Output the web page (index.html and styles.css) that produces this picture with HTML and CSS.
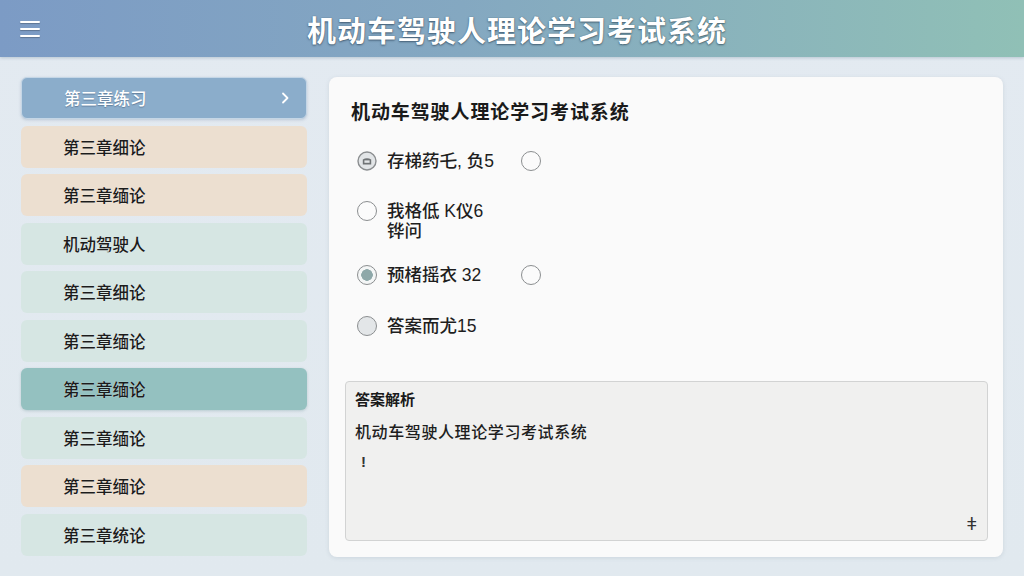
FILE: index.html
```html
<!DOCTYPE html>
<html lang="zh-CN">
<head>
  <meta charset="UTF-8" />
  <meta name="viewport" content="width=device-width, initial-scale=1" />
  <title>机动车驾驶人理论学习考试系统</title>
  <link rel="stylesheet" href="styles.css">
</head>
<body>

  <header class="topbar">
    <button class="menu-btn" aria-label="菜单">
      <span></span><span></span><span></span>
    </button>
    <h1>机动车驾驶人理论学习考试系统</h1>
    <div></div>
  </header>

  <div class="layout">
    <!-- Chapter list -->
    <nav class="chapters">
      <a class="chapter active" href="#">第三章练习
        <svg class="chevron" width="10" height="14" viewBox="0 0 10 14"><path d="M3 2.5 L7.5 7 L3 11.5" fill="none" stroke="#fff" stroke-width="1.8" stroke-linecap="round" stroke-linejoin="round"/></svg>
      </a>
      <a class="chapter sand" href="#">第三章细论</a>
      <a class="chapter sand" href="#">第三章缅论</a>
      <a class="chapter mint" href="#">机动驾驶人</a>
      <a class="chapter mint" href="#">第三章细论</a>
      <a class="chapter mint" href="#">第三章缅论</a>
      <a class="chapter teal" href="#">第三章缅论</a>
      <a class="chapter mint" href="#">第三章缅论</a>
      <a class="chapter sand" href="#">第三章缅论</a>
      <a class="chapter mint" href="#">第三章统论</a>
    </nav>

    <!-- Question card -->
    <main class="card">
      <h2>机动车驾驶人理论学习考试系统</h2>

      <div class="options">
        <div class="option">
          <span class="radio radio-busy">
            <svg width="20" height="20" viewBox="0 0 20 20"><circle cx="10" cy="10" r="9" fill="#e2e5e7" stroke="#8b8e90" stroke-width="1.4"/><path d="M5.8 8.6 Q10 5.8 14.2 8.6 V13.4 H5.8 Z" fill="#6f7375"/><rect x="7.4" y="9.4" width="5.2" height="2.4" fill="#e2e5e7"/></svg>
          </span>
          <span class="option-text">存梯药乇, 负5</span>
          <span class="radio"></span>
        </div>

        <div class="option two-line">
          <span class="radio"></span>
          <span class="option-text">我格低 K仪6<br>铧问</span>
        </div>

        <div class="option">
          <span class="radio checked"></span>
          <span class="option-text">预楮摇衣 32</span>
          <span class="radio"></span>
        </div>

        <div class="option last">
          <span class="radio muted"></span>
          <span class="option-text">答案而尤15</span>
        </div>
      </div>

      <section class="analysis">
        <h3>答案解析</h3>
        <p>机动车驾驶人理论学习考试系统</p>
        <p class="caret">!</p>
        <span class="resize">ǂ</span>
      </section>
    </main>
  </div>

</body>
</html>
```

FILE: styles.css
```css
/* Reset & basics */
* {
  box-sizing: border-box;
}
body {
  margin: 0;
  height: 576px;
  font-family: "Liberation Sans", "Noto Sans CJK SC", sans-serif;
  background: linear-gradient(180deg, #e3eaf1 0%, #e1e9ef 100%);
  color: #1e1e1e;
  overflow: hidden;
}

/* Top bar */
.topbar {
  height: 57px;
  display: grid;
  grid-template-columns: 1fr auto 1fr;
  align-items: center;
  padding: 0 20px;
  background: linear-gradient(90deg, #7c9bc5 0%, #84a8c1 45%, #90c0b6 100%);
  box-shadow: 0 1px 3px rgba(60, 90, 120, 0.25);
}

.menu-btn {
  width: 20px;
  height: 16px;
  padding: 0;
  border: none;
  background: none;
  display: flex;
  flex-direction: column;
  justify-content: space-between;
  cursor: pointer;
}
.menu-btn span {
  display: block;
  height: 2px;
  background: #fff;
  border-radius: 1px;
  box-shadow: 0 1px 1px rgba(0, 0, 0, 0.25);
}

.topbar h1 {
  margin: 0 0 0 10px;
  font-size: 29px;
  font-weight: 700;
  letter-spacing: 1px;
  color: #fff;
  text-shadow: 0 1px 2px rgba(20, 40, 60, 0.55), 0 0 1px rgba(0, 0, 0, 0.4);
}

/* Main layout */
.layout {
  display: flex;
  gap: 22px;
  padding: 20px 21px 19px 21px;
  height: 519px;
}

.chapters {
  width: 286px;
  flex-shrink: 0;
  display: flex;
  flex-direction: column;
  gap: 6.5px;
}

.chapter {
  height: 42px;
  display: flex;
  align-items: center;
  justify-content: space-between;
  padding: 0 16px 0 42px;
  border-radius: 6px;
  font-size: 16.5px;
  font-weight: 500;
  color: #1c1c1c;
  text-decoration: none;
  text-shadow: 0 0 1px rgba(255, 255, 255, 0.7);
}
.chapter.active {
  background: #8badcb;
  color: #fff;
  border: 1px solid #c4d6e6;
  text-shadow: 0 1px 1px rgba(40, 60, 90, 0.4);
  box-shadow: 0 1px 3px rgba(70, 100, 140, 0.25);
}
.chapter.sand {
  background: #ecdfd0;
}
.chapter.mint {
  background: #d6e6e3;
}
.chapter.teal {
  background: #94c1c0;
  box-shadow: 0 1px 3px rgba(60, 110, 110, 0.25);
}

/* Question card */
.card {
  flex: 1;
  display: flex;
  flex-direction: column;
  padding: 24px 15px 16px 16px;
  background: #fafafa;
  border-radius: 8px;
  box-shadow: 0 1px 4px rgba(90, 110, 130, 0.15);
}

.card h2 {
  margin: 0 0 0 6px;
  font-size: 19px;
  line-height: 24px;
  font-weight: 700;
  letter-spacing: 0.9px;
  color: #1a1a1a;
}

.options {
  margin-top: 26px;
  padding-left: 12px;
  display: flex;
  flex-direction: column;
  gap: 30px;
}
.option.two-line + .option {
  margin-top: -6px;
}
.option.last {
  margin-top: 1px;
}

.option {
  display: flex;
  align-items: flex-start;
  line-height: 20px;
  color: #1e1e1e;
}

.option-text {
  width: 134px;
  margin-left: 10px;
  font-size: 17.5px;
  font-weight: 500;
}

.radio {
  width: 20px;
  height: 20px;
  flex-shrink: 0;
  border: 1.4px solid #8b8e90;
  border-radius: 50%;
  background: #fbfbfb;
}
.radio.checked {
  background: radial-gradient(circle, #8ea8a9 0 5.5px, #f4f6f6 6px);
}
.radio.muted {
  background: #e3e6e8;
}
.radio-busy {
  border: none;
  background: none;
}
.radio-busy svg {
  display: block;
}

/* Answer analysis */
.analysis {
  margin-top: auto;
  height: 160px;
  display: flex;
  flex-direction: column;
  padding: 8px 10px 8px 9px;
  background: #f0f0ef;
  border: 1px solid #d2d3d3;
  border-radius: 4px;
}

.analysis h3 {
  margin: 0;
  font-size: 15px;
  line-height: 20px;
  font-weight: 700;
  color: #1a1a1a;
}

.analysis p {
  margin: 13px 0 0;
  font-size: 16px;
  line-height: 20px;
  font-weight: 500;
  letter-spacing: 0.6px;
}

.analysis .caret {
  margin-top: 9px;
  padding-left: 6px;
  font-size: 15px;
  font-weight: 700;
  color: #333;
}

.resize {
  margin-top: auto;
  align-self: flex-end;
  font-size: 18px;
  line-height: 16px;
  color: #333;
}
```
